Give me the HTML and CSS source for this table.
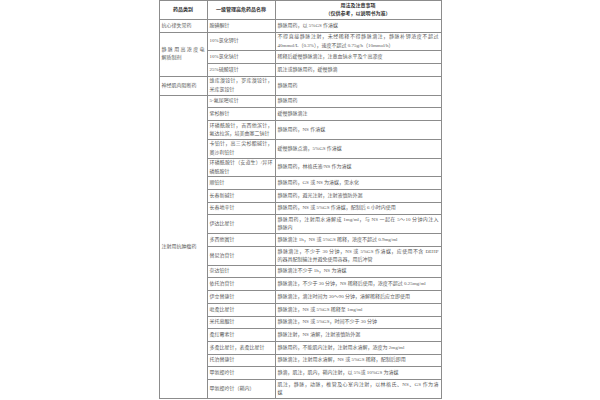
FILE: index.html
```html
<!DOCTYPE html>
<html lang="zh-CN">
<head>
<meta charset="utf-8">
<title>一级管理高危药品</title>
<link rel="stylesheet" href="styles.css">
</head>
<body>
<table class="drug-table">
  <colgroup><col class="c1"><col class="c2"><col class="c3"></colgroup>
  <thead>
    <tr class="head">
      <th>药品类别</th>
      <th>一级管理高危药品名称</th>
      <th>用法及注意事项<br>（仅供参考，以说明书为准）</th>
    </tr>
  </thead>
  <tbody>
    <tr class="s"><td>抗心律失常药</td><td>胺碘酮针</td><td>静脉用药，以 5%GS 作溶媒</td></tr>
    <tr class="d"><td rowspan="3"><span class="fill">静脉用高浓度电</span>解质制剂</td><td>10%氯化钾针</td><td><span class="fill">不得直接静脉注射，未经稀释不得静脉滴注，静脉补钾浓度不超过</span>40mmol/L（0.3%），速度不超过 0.75g/h（10mmol/h）</td></tr>
    <tr class="s"><td>10%氯化钠针</td><td>稀释后缓慢静脉滴注，注意血钠水平及个高渗度</td></tr>
    <tr class="s"><td>25%硫酸镁针</td><td>肌注或静脉用药，缓慢静滴</td></tr>
    <tr class="d"><td>神经肌肉阻断药</td><td><span class="fill">维库溴铵针，罗库溴铵针，</span>米库氯铵针</td><td>静脉用药</td></tr>
    <tr class="s"><td rowspan="21">注射用抗肿瘤药</td><td>5-氟尿嘧啶针</td><td>静脉用药</td></tr>
    <tr class="s"><td>紫杉醇针</td><td>缓慢静脉滴注</td></tr>
    <tr class="d"><td><span class="fill">环磷酰胺针，吉西他滨针，</span>氟达拉滨，培美曲塞二钠针</td><td>静脉用药，NS 作溶媒</td></tr>
    <tr class="d"><td><span class="fill">卡铂针，高三尖杉酯碱针，</span>奥沙利铂针</td><td>缓慢静脉点滴，5%GS 作溶媒</td></tr>
    <tr class="d"><td><span class="fill">环磷酰胺针（安道生）/异环</span>磷酰胺针</td><td>静脉用药，林格氏液/NS 作为溶媒</td></tr>
    <tr class="s"><td>顺铂针</td><td>静脉用药，GS 或 NS 为溶媒，需水化</td></tr>
    <tr class="s"><td>长春新碱针</td><td>静脉用药，避光注射，注射液慎防外漏</td></tr>
    <tr class="s"><td>长春地辛针</td><td>静脉用药，NS 或 5%GS 作溶媒，配制后 6 小时内使用</td></tr>
    <tr class="d"><td>伊达比星针</td><td><span class="fill">静脉用药，注射用水溶解成 1mg/ml，与 NS 一起在 5～10 分钟内注入</span>静脉内</td></tr>
    <tr class="s"><td>多西他赛针</td><td>静脉滴注 1h，NS 或 5%GS 稀释，浓度不超过 0.9mg/ml</td></tr>
    <tr class="d"><td>替尼泊苷针</td><td><span class="fill">静脉滴注，不少于 30 分钟，NS 或 5%GS 作溶媒，应使用不含 DEHP</span>的器具配制输注并避免使用容器，用后冲管</td></tr>
    <tr class="s"><td>奈达铂针</td><td>静脉滴注不少于 1h，NS 为溶媒</td></tr>
    <tr class="s"><td>依托泊苷针</td><td>静脉滴注，不少于 30 分钟，NS 稀释后使用，浓度不超过 0.25mg/ml</td></tr>
    <tr class="s"><td>伊立替康针</td><td>静脉滴注，滴注时间为 30～90 分钟，溶解稀释后应立即使用</td></tr>
    <tr class="s"><td>吡柔比星针</td><td>静脉滴注，NS 或 5%GS 稀释至 1mg/ml</td></tr>
    <tr class="s"><td>米托蒽醌针</td><td>静脉滴注，NS 或 5%GS，时间不少于 30 分钟</td></tr>
    <tr class="s"><td>柔红霉素针</td><td>静脉注射，NS 溶解，注射液慎防外漏</td></tr>
    <tr class="s"><td>多柔比星针，表柔比星针</td><td>静脉用药，不能肌内注射，注射用水溶解，浓度为 2mg/ml</td></tr>
    <tr class="s"><td>托泊替康针</td><td>静脉滴注，注射用水溶解，NS 或 5%GS 稀释，配制后即用</td></tr>
    <tr class="s"><td>甲氨蝶呤针</td><td>静滴，肌注，肌内，鞘内注射，以 5%或 10%GS 为溶媒</td></tr>
    <tr class="d"><td>甲氨蝶呤针（鞘内）</td><td><span class="fill">肌注，静脉，动脉，椎管及心室内注射，以林格氏、NS、GS 作为溶</span>媒</td></tr>
  </tbody>
</table>
</body>
</html>
```

FILE: styles.css
```css
html, body {
  margin: 0;
  padding: 0;
  background: #ffffff;
  overflow: hidden;
}

body {
  font-family: "Liberation Serif", "Noto Sans CJK SC", serif;
  color: #5a5a5a;
}

.drug-table {
  width: 282px;
  margin: 0 auto;
  border-collapse: collapse;
  table-layout: fixed;
  font-size: 5px;
  line-height: 8.3px;
  border: 1px solid #6e6e6e;
}

.c1 { width: 48px; }
.c2 { width: 68px; }
.c3 { width: 166px; }

.drug-table th,
.drug-table td {
  border: 1px solid #8c8c8c;
  padding: 0.5px 2px;
  vertical-align: middle;
  text-align: left;
  white-space: nowrap;
  overflow: hidden;
}

.drug-table th {
  font-weight: bold;
  text-align: center;
  color: #333333;
}

.fill {
  display: block;
  text-align: justify;
  text-align-last: justify;
}

.head { height: 19px; }
.s { height: 12.7px; }
.d { height: 18.8px; }
```
